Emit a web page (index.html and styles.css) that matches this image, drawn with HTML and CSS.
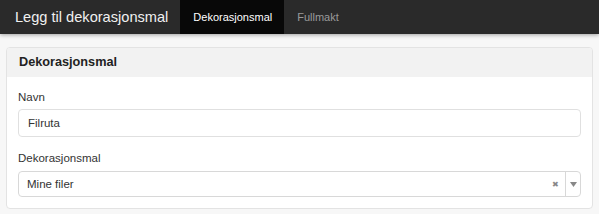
FILE: index.html
```html
<!DOCTYPE html>
<html lang="no">
<head>
    <meta charset="UTF-8">
    <title>Legg til dekorasjonsmal</title>
    <link rel="stylesheet" href="styles.css">
</head>
<body>
    <nav class="navbar">
        <span class="brand">Legg til dekorasjonsmal</span>
        <a class="tab active" href="#">Dekorasjonsmal</a>
        <a class="tab" href="#">Fullmakt</a>
    </nav>

    <div class="panel">
        <div class="panel-heading">Dekorasjonsmal</div>
        <div class="panel-body">
            <div class="form-group">
                <label>Navn</label>
                <div class="input">Filruta</div>
            </div>
            <div class="form-group last">
                <label>Dekorasjonsmal</label>
                <div class="select">
                    <span class="value">Mine filer</span>
                    <span class="clear">&#x2716;</span>
                    <span class="arrow"><svg width="7" height="5" viewBox="0 0 7 5"><path d="M0 0h7L3.5 5z" fill="#888"/></svg></span>
                </div>
            </div>
        </div>
    </div>
</body>
</html>
```

FILE: styles.css
```css
body {
    margin: 0;
    background-color: #f7f7f7;
    font-family: "Liberation Sans", Arial, sans-serif;
    font-size: 11.5px;
    color: #333;
}
.navbar {
    display: flex;
    align-items: stretch;
    height: 34px;
    background-color: #2a2a2a;
    box-shadow: 0 1px 4px rgba(0, 0, 0, 0.35);
}
.brand {
    display: flex;
    align-items: center;
    padding: 0 12px 0 15px;
    font-size: 14.6px;
    color: #f0f0f0;
}
.tab {
    display: flex;
    align-items: center;
    padding: 0 12px 0 13px;
    font-size: 11px;
    color: #9a9a9a;
    text-decoration: none;
}
.tab.active {
    background-color: #080808;
    color: #fff;
}
.panel {
    margin: 13px 6px 0 6px;
    border: 1px solid #e3e3e3;
    border-radius: 4px;
    background-color: #fff;
    overflow: hidden;
}
.panel-heading {
    height: 29px;
    line-height: 29px;
    padding: 0 12px;
    background-color: #f2f2f2;
    font-weight: bold;
    font-size: 12.7px;
    color: #222;
}
.panel-body {
    padding: 10px 11px 11px 11px;
}
.form-group {
    margin-bottom: 11px;
}
.form-group.last {
    margin-bottom: 0;
}
label {
    display: block;
    line-height: 20px;
    margin-bottom: 2px;
}
.input {
    height: 26px;
    line-height: 26px;
    padding: 0 9px;
    border: 1px solid #e0e0e0;
    border-radius: 4px;
}
.select {
    display: flex;
    align-items: center;
    height: 24px;
    margin-top: 3px;
    border: 1px solid #d8d8d8;
    border-radius: 4px;
}
.select .value {
    flex: 1;
    padding: 0 8px;
}
.select .clear {
    width: 13px;
    font-size: 8px;
    color: #888;
}
.select .arrow {
    display: flex;
    align-items: center;
    justify-content: center;
    width: 14px;
    height: 100%;
    border-left: 1px solid #d8d8d8;
}
```
